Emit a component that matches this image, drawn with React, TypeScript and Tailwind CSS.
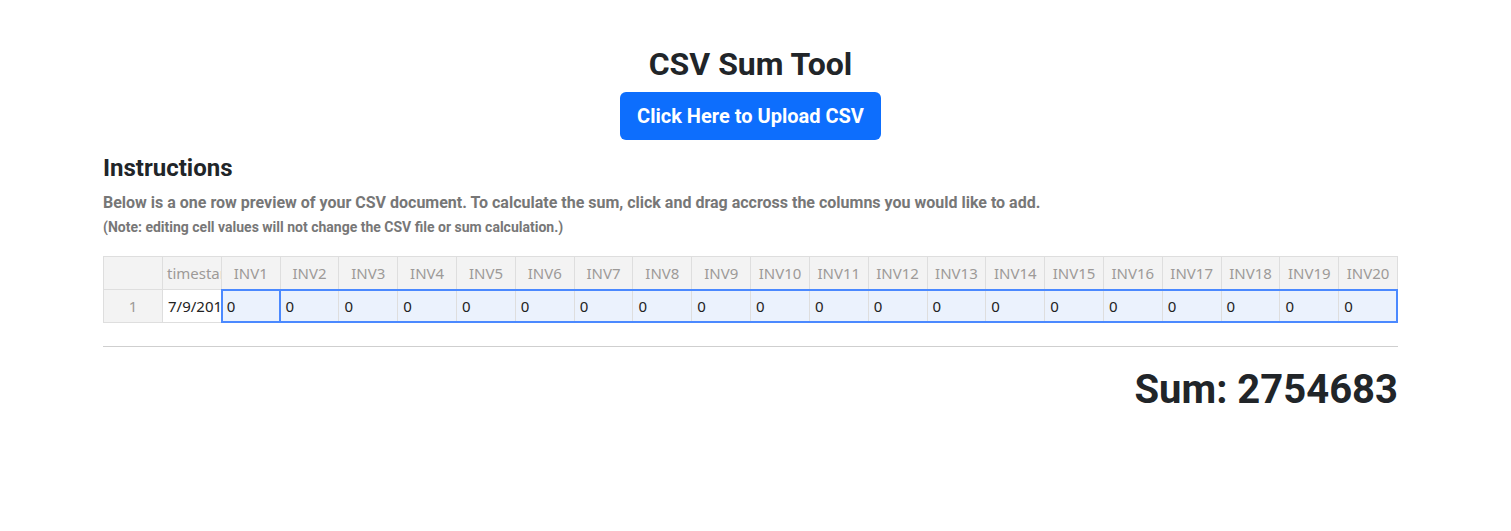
const columns = ['timestamp', ...Array.from({ length: 20 }, (_, i) => `INV${i + 1}`)];
const row = ['7/9/2019 0:00', ...Array.from({ length: 20 }, () => '0')];

const cellFont = { fontFamily: '"Noto Sans", "Open Sans", sans-serif' };

function PreviewTable() {
  return (
    <div className="relative text-[15px]" style={cellFont}>
      <div className="grid grid-cols-[59px_repeat(21,minmax(0,1fr))] border-t border-l border-[#dedede]">
        <div className="h-[33px] bg-[#f3f3f3] border-r border-b border-[#dedede]" />
        {columns.map((c, i) => (
          <div
            key={c}
            className={
              'h-[33px] bg-[#f3f3f3] border-r border-b border-[#dedede] text-[#9d9a98] flex items-center overflow-hidden whitespace-nowrap ' +
              (i === 0 ? 'pl-1' : 'justify-center')
            }
          >
            {c}
          </div>
        ))}
        <div className="h-[33px] bg-[#f3f3f3] border-r border-b border-[#dedede] text-[#9d9a98] flex items-center justify-center">
          1
        </div>
        {row.map((v, i) => (
          <div
            key={i}
            className={
              'h-[33px] border-r border-b border-[#dedede] flex items-center pl-[5px] overflow-hidden whitespace-nowrap text-[#222] ' +
              (i === 0 ? 'bg-white' : 'bg-[#ebf2fd]')
            }
          >
            {v}
          </div>
        ))}
      </div>
      {/* selection overlay */}
      <div className="pointer-events-none absolute left-[calc(59px+(100%-59px)/21)] right-0 top-[33px] h-[34px] border-2 border-[#4b89ff]" />
      <div className="pointer-events-none absolute left-[calc(59px+(100%-59px)/21)] w-[calc((100%-59px)/21+1px)] top-[33px] h-[34px] border-2 border-[#4b89ff]" />
    </div>
  );
}

export default function App() {
  return (
    <div className="min-h-screen bg-white text-[#212529]" style={{ fontFamily: 'Roboto, "Liberation Sans", sans-serif' }}>
      <div className="ml-[103px] w-[1295px] pt-[45px]">
        <h1 className="text-center text-[32px] font-bold leading-[1.2]">CSV Sum Tool</h1>
        <div className="mt-[9px] flex justify-center">
          <button className="h-[48px] px-[17px] rounded-[6px] bg-[#0d6efd] text-white text-[20px] font-bold">
            Click Here to Upload CSV
          </button>
        </div>
        <h2 className="mt-[14px] text-[24px] font-bold leading-[1.2]">Instructions</h2>
        <p className="mt-[8px] text-[16px] font-bold text-[#777777] leading-[1.5]">
          Below is a one row preview of your CSV document. To calculate the sum, click and drag accross the columns you
          would like to add.
        </p>
        <p className="mt-[2px] text-[14px] font-bold text-[#777777] leading-[1.5]">
          (Note: editing cell values will not change the CSV file or sum calculation.)
        </p>
        <div className="mt-[18px]">
          <PreviewTable />
        </div>
        <hr className="mt-[23px] border-t border-[#cfcfcf]" />
        <div className="mt-[19px] text-right text-[40px] font-bold leading-[1.2]">Sum: 2754683</div>
      </div>
    </div>
  );
}
